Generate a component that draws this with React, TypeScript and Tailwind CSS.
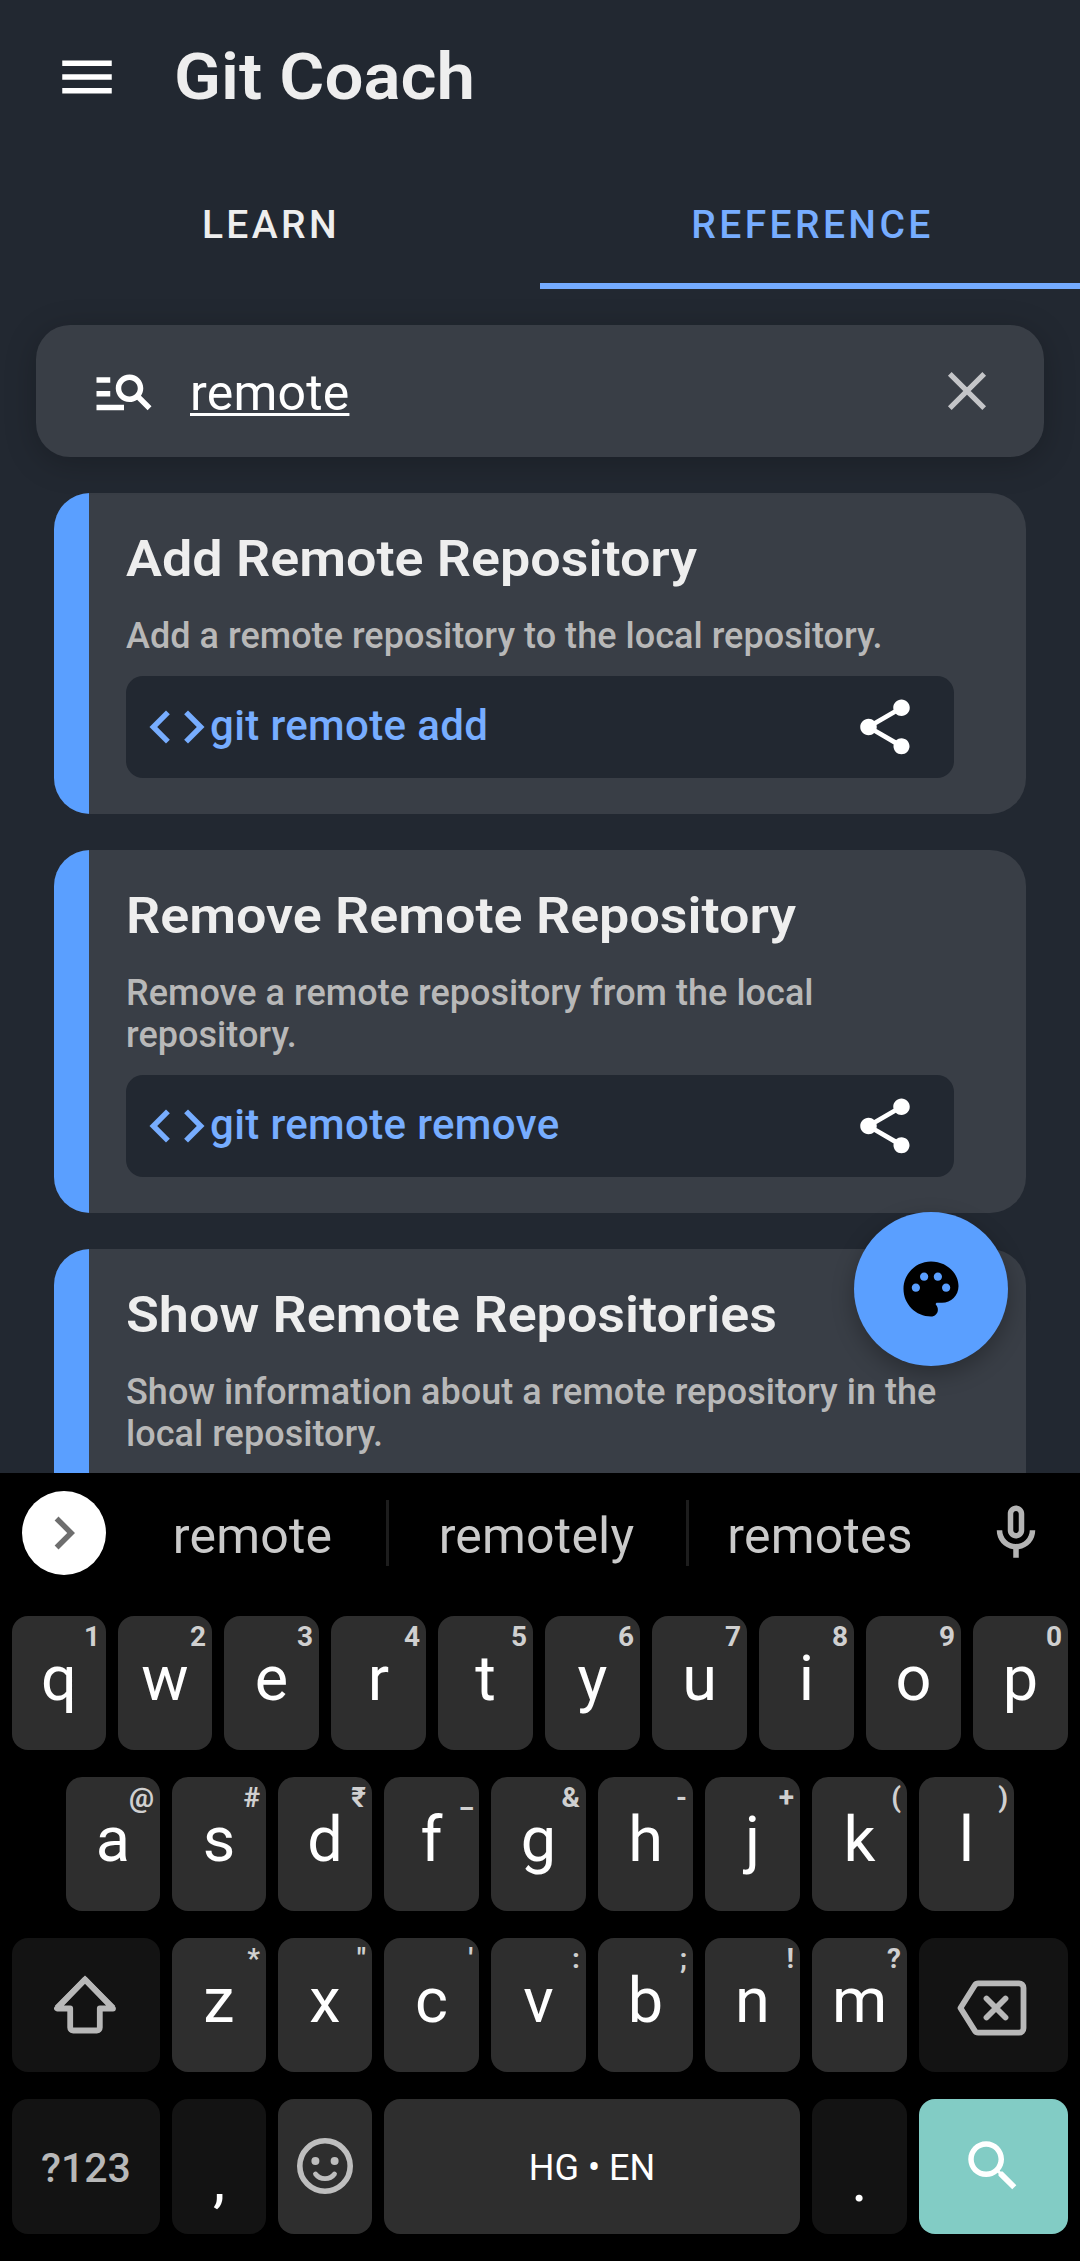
import React from 'react';

const paths = {
  menu: 'M3 18h18v-2H3v2zm0-5h18v-2H3v2zm0-7v2h18V6H3z',
  manageSearch:
    'M7 9H2V7h5v2zm0 3H2v2h5v-2zm13.59 7-3.83-3.83c-.8.52-1.74.83-2.76.83-2.76 0-5-2.24-5-5s2.24-5 5-5 5 2.24 5 5c0 1.02-.31 1.96-.83 2.75L22 17.59 20.59 19zM17 11c0-1.65-1.35-3-3-3s-3 1.35-3 3 1.35 3 3 3 3-1.35 3-3zM2 19h10v-2H2v2z',
  code: 'M9.4 16.6 4.8 12l4.6-4.6L8 6l-6 6 6 6 1.4-1.4zm5.2 0 4.6-4.6-4.6-4.6L16 6l6 6-6 6-1.4-1.4z',
  share:
    'M18 16.08c-.76 0-1.44.3-1.96.77L8.91 12.7c.05-.23.09-.46.09-.7s-.04-.47-.09-.7l7.05-4.11c.54.5 1.25.81 2.04.81 1.66 0 3-1.34 3-3s-1.34-3-3-3-3 1.34-3 3c0 .24.04.47.09.7L8.04 9.81C7.5 9.31 6.79 9 6 9c-1.66 0-3 1.34-3 3s1.34 3 3 3c.79 0 1.5-.31 2.04-.81l7.12 4.16c-.05.21-.08.43-.08.65 0 1.61 1.31 2.92 2.92 2.92s2.92-1.31 2.92-2.92-1.31-2.92-2.92-2.92z',
  palette:
    'M12 2C6.49 2 2 6.49 2 12s4.49 10 10 10c1.38 0 2.5-1.12 2.5-2.5 0-.61-.23-1.2-.64-1.67-.08-.1-.13-.21-.13-.33 0-.28.22-.5.5-.5H16c3.31 0 6-2.69 6-6 0-4.96-4.49-9-10-9zM6.5 13c-.83 0-1.5-.67-1.5-1.5S5.67 10 6.5 10s1.5.67 1.5 1.5S7.33 13 6.5 13zm3-4C8.67 9 8 8.33 8 7.5S8.67 6 9.5 6s1.5.67 1.5 1.5S10.33 9 9.5 9zm5 0c-.83 0-1.5-.67-1.5-1.5S13.67 6 14.5 6s1.5.67 1.5 1.5S15.33 9 14.5 9zm3 4c-.83 0-1.5-.67-1.5-1.5s.67-1.5 1.5-1.5 1.5.67 1.5 1.5-.67 1.5-1.5 1.5z',
  chevron: 'M10 6 8.59 7.41 13.17 12l-4.58 4.59L10 18l6-6z',
  mic: 'M12 14c1.66 0 3-1.34 3-3V5c0-1.66-1.34-3-3-3S9 3.34 9 5v6c0 1.66 1.34 3 3 3zm-1-9c0-.55.45-1 1-1s1 .45 1 1v6c0 .55-.45 1-1 1s-1-.45-1-1V5zm6 6c0 2.76-2.24 5-5 5s-5-2.24-5-5H5c0 3.53 2.61 6.43 6 6.92V21h2v-3.08c3.39-.49 6-3.39 6-6.92h-2z',
  search:
    'M15.5 14h-.79l-.28-.27C15.41 12.59 16 11.11 16 9.5 16 5.91 13.09 3 9.5 3S3 5.91 3 9.5 5.91 16 9.5 16c1.61 0 3.09-.59 4.23-1.57l.27.28v.79l5 4.99L20.49 19l-4.99-5zm-6 0C7.01 14 5 11.99 5 9.5S7.01 5 9.5 5 14 7.01 14 9.5 11.99 14 9.5 14z',
};

function Icon({ name, className = '' }: { name: keyof typeof paths; className?: string }) {
  return (
    <svg viewBox="0 0 24 24" fill="currentColor" className={`size-[66px] shrink-0 ${className}`}>
      <path d={paths[name]} />
    </svg>
  );
}

type Entry = { title: string; text: string; command?: string };

const entries: Entry[] = [
  {
    title: 'Add Remote Repository',
    text: 'Add a remote repository to the local repository.',
    command: 'git remote add',
  },
  {
    title: 'Remove Remote Repository',
    text: 'Remove a remote repository from the local repository.',
    command: 'git remote remove',
  },
  {
    title: 'Show Remote Repositories',
    text: 'Show information about a remote repository in the local repository.',
  },
];

function EntryCard({ title, text, command }: Entry) {
  return (
    <article className="flex shrink-0 overflow-hidden rounded-[36px] bg-[#393e46]">
      <div className="w-[35px] shrink-0 bg-[#5a9fff]" />
      <div className="flex-1 pt-9 pr-[72px] pb-9 pl-[37px]">
        <h2 className="origin-left scale-x-[1.077] text-[50px] leading-[60px] font-semibold whitespace-nowrap text-[#eeeeee]">
          {title}
        </h2>
        <p className="mt-[26px] text-[36px] leading-[42px] font-medium tracking-[0.04px] text-[#b8b8b8]">{text}</p>
        <div className="mt-[19px] flex h-[102px] items-center rounded-[17px] bg-[#222831] pr-9 pl-[18px]">
          {command && (
            <>
              <Icon name="code" className="text-[#77adff]" />
              <span className="flex-1 pb-[2px] text-[42px] leading-none font-medium tracking-[0.36px] text-[#77adff]">
                {command}
              </span>
              <Icon name="share" className="text-white" />
            </>
          )}
        </div>
      </div>
    </article>
  );
}

function LetterKey({ char, hint, narrow }: { char: string; hint: string; narrow: boolean }) {
  return (
    <div
      className={`relative flex h-[134px] items-center justify-center rounded-2xl bg-[#2e2e2e] pb-[10px] text-[63px] leading-none text-white ${
        narrow ? 'w-[94px]' : 'w-[95px]'
      }`}
    >
      {char}
      <span className="absolute top-[7px] right-[6px] text-[28px] leading-[28px] font-bold text-[#d0d0d0]">{hint}</span>
    </div>
  );
}

const rowOne = ['q1', 'w2', 'e3', 'r4', 't5', 'y6', 'u7', 'i8', 'o9', 'p0'];
const rowTwo = ['a@', 's#', 'd₹', 'f_', 'g&', 'h-', 'j+', 'k(', 'l)'];
const rowThree = ['z*', 'x"', "c'", 'v:', 'b;', 'n!', 'm?'];

function Letters({ keys, narrowCount }: { keys: string[]; narrowCount: number }) {
  return (
    <>
      {keys.map((k, i) => (
        <LetterKey key={k} char={k[0]} hint={k[1]} narrow={i < narrowCount} />
      ))}
    </>
  );
}

function Keyboard() {
  return (
    <section className="h-[788px] bg-black">
      <div className="flex h-[120px] items-center text-[50px] leading-none tracking-[0.2px] text-[#cacaca]">
        <div className="ml-[22px] flex size-[84px] items-center justify-center rounded-full bg-white text-[#6e6e6e]">
          <Icon name="chevron" />
        </div>
        <span className="ml-[15px] w-[265px] pt-[6px] pr-[2px] text-center">remote</span>
        <div className="h-[66px] w-[3px] bg-[#1d1d1d]" />
        <span className="w-[297px] pt-[6px] pr-[2px] text-center">remotely</span>
        <div className="h-[66px] w-[3px] bg-[#1d1d1d]" />
        <span className="w-[262px] pt-[6px] text-center">remotes</span>
        <Icon name="mic" className="ml-8 text-[#b4b4b4]" />
      </div>
      <div className="flex flex-col gap-[27px] px-3 pt-[23px]">
        <div className="flex gap-3">
          <Letters keys={rowOne} narrowCount={2} />
        </div>
        <div className="flex justify-center gap-3">
          <Letters keys={rowTwo} narrowCount={3} />
        </div>
        <div className="flex gap-3">
          <div className="flex h-[134px] w-[148px] items-center justify-center rounded-2xl bg-[#131313] pr-[2px] text-[#b8b8b8]">
            <svg viewBox="0 0 66 66" fill="none" stroke="currentColor" strokeWidth="5.8" className="size-[66px]">
              <path d="M5 35.7 33 7.5l28 28.2" strokeLinejoin="miter" />
              <path d="M33 7.5 5 36.5h13.2v19a3 3 0 0 0 3 3h23.6a3 3 0 0 0 3-3v-19H61z" strokeLinejoin="round" />
            </svg>
          </div>
          <Letters keys={rowThree} narrowCount={2} />
          <div className="flex h-[134px] w-[149px] items-center justify-center rounded-2xl bg-[#131313] pr-[3px] text-[#b8b8b8]">
            <svg
              viewBox="0 0 74 66"
              fill="none"
              stroke="currentColor"
              strokeWidth="5.8"
              strokeLinejoin="round"
              className="h-[66px] w-[74px]"
            >
              <path d="M5.5 36 19.8 13.2a4 4 0 0 1 3.4-1.9H64a4.5 4.5 0 0 1 4.5 4.5v40.4a4.5 4.5 0 0 1-4.5 4.5H23.2a4 4 0 0 1-3.4-1.9z" />
              <path d="m31.5 26.5 19 19m0-19-19 19" strokeLinecap="round" />
            </svg>
          </div>
        </div>
        <div className="flex gap-3">
          <div className="flex h-[135px] w-[148px] items-center justify-center rounded-2xl bg-[#131313] pt-[3px] text-[41px] leading-none font-medium text-[#b8b8b8]">
            ?123
          </div>
          <div className="flex h-[135px] w-[94px] items-center justify-center rounded-2xl bg-[#131313] pt-[26px] text-[62px] leading-none text-white">
            ,
          </div>
          <div className="flex h-[135px] w-[94px] items-center justify-center rounded-2xl bg-[#2e2e2e] pb-[2px] text-[#bebebe]">
            <svg viewBox="0 0 60 60" fill="none" stroke="currentColor" strokeWidth="5.6" className="size-[60px]">
              <circle cx="30" cy="30" r="25.2" />
              <circle cx="20.4" cy="25" r="4" fill="currentColor" stroke="none" />
              <circle cx="39.6" cy="25" r="4" fill="currentColor" stroke="none" />
              <path d="M20.5 38c4.5 6.2 14.5 6.2 19 0" strokeWidth="4.8" strokeLinecap="round" />
            </svg>
          </div>
          <div className="flex h-[135px] w-[416px] items-center justify-center rounded-2xl bg-[#2e2e2e] pt-[2px] text-[36px] leading-none text-white">
            HG • EN
          </div>
          <div className="flex h-[135px] w-[95px] items-center justify-center rounded-2xl bg-[#131313] pt-[26px] text-[62px] leading-none text-white">
            .
          </div>
          <div className="flex h-[135px] w-[149px] items-center justify-center rounded-2xl bg-[#82ccc5] pr-px pb-px text-white">
            <Icon name="search" />
          </div>
        </div>
      </div>
    </section>
  );
}

export default function App() {
  return (
    <div className="flex h-[2261px] w-[1080px] flex-col overflow-hidden bg-[#222831] font-['Roboto',sans-serif]">
      <main className="relative flex h-[1473px] shrink-0 flex-col overflow-hidden">
        <header className="flex h-[160px] shrink-0 items-center pb-[6px] pl-[54px]">
          <Icon name="menu" className="text-white" />
          <h1 className="ml-[54px] origin-left scale-x-[1.078] pt-px text-[64px] leading-none font-semibold text-[#eeeeee]">
            Git Coach
          </h1>
        </header>
        <nav className="grid h-[129px] shrink-0 grid-cols-2 text-[39px] leading-none font-medium tracking-[3.4px]">
          <div className="flex items-center justify-center pt-[2px] pl-[2px] text-[#eeeeee]">LEARN</div>
          <div className="relative flex items-center justify-center pt-[2px] pl-[5px] text-[#77adff]">
            REFERENCE
            <div className="absolute inset-x-0 bottom-0 h-[6px] bg-[#74abff]" />
          </div>
        </nav>
        <div className="z-10 mx-9 mt-9 flex h-[132px] shrink-0 items-center rounded-[34px] bg-[#393e46] pr-[44px] pl-[55px] shadow-[0_6px_32px_rgba(0,0,0,0.22)]">
          <Icon name="manageSearch" className="text-white" />
          <span className="ml-[33px] flex-1 pt-[3px] text-[50px] leading-none tracking-[0.2px] text-white">
            <span className="underline decoration-[3px] underline-offset-[3px]">remote</span>
          </span>
          <svg viewBox="0 0 66 66" stroke="#c4c5c8" strokeWidth="5.2" className="size-[66px]">
            <path d="m15.8 15.8 34.4 34.4m0-34.4-34.4 34.4" />
          </svg>
        </div>
        <div className="mt-9 flex flex-col gap-9 px-[54px]">
          {entries.map((e) => (
            <EntryCard key={e.title} {...e} />
          ))}
        </div>
        <button className="absolute top-[1212px] left-[854px] flex size-[154px] items-center justify-center rounded-full bg-[#5a9fff] text-black shadow-[0_8px_22px_rgba(0,0,0,0.28)]">
          <Icon name="palette" />
        </button>
      </main>
      <Keyboard />
    </div>
  );
}
